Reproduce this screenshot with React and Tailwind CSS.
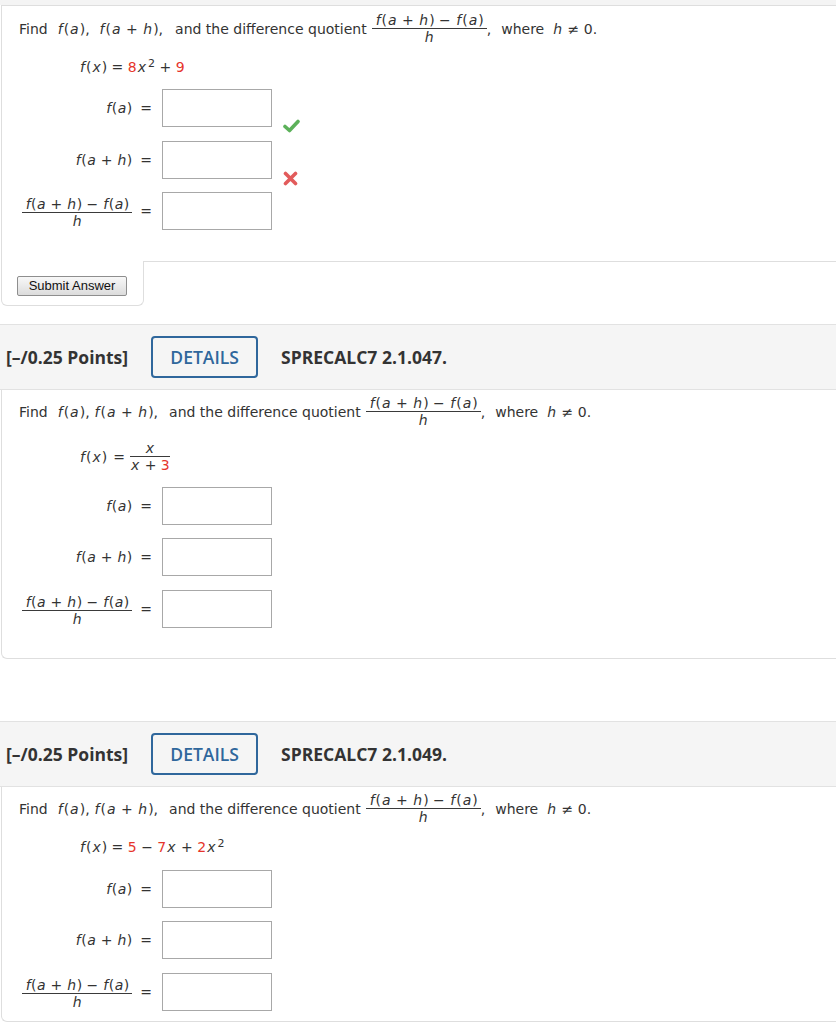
import React from 'react';

const RED = 'text-[#e6352b]';

const V = ({ children, tight }) => <i className={tight ? 'px-[0.5px]' : 'px-[1px]'}>{children}</i>;

function Frac({ num, den, className = '' }) {
  return (
    <span className={`inline-flex flex-col items-center leading-[16px] ${className}`}>
      <span className="px-[3px] whitespace-nowrap">{num}</span>
      <span className="self-stretch h-px bg-[#3a3a3a]" />
      <span className="whitespace-nowrap">{den}</span>
    </span>
  );
}

const FA = ({ tight }) => (
  <span className="whitespace-nowrap">
    <V tight={tight}>f</V>(<V tight={tight}>a</V>)
  </span>
);
const FAH = ({ tight }) => (
  <span className="whitespace-nowrap">
    <V tight={tight}>f</V>(<V tight={tight}>a</V> + <V tight={tight}>h</V>)
  </span>
);
const DQ = ({ className = '', tight }) => (
  <Frac
    className={className}
    num={
      <>
        <FAH tight={tight} /> − <FA tight={tight} />
      </>
    }
    den={<V tight={tight}>h</V>}
  />
);

function Check() {
  return (
    <svg width="17" height="14" viewBox="0 0 17 14" className="ml-[11px] self-end mb-[-6px]">
      <polyline points="2,7.5 6.5,11.5 15,2.5" fill="none" stroke="#5cb15a" strokeWidth="3.6" strokeLinecap="round" strokeLinejoin="round" />
    </svg>
  );
}

function Cross() {
  return (
    <svg width="15" height="15" viewBox="0 0 15 15" className="ml-[11px] self-end mb-[-7px]">
      <path d="M2.5 2.5 L12.5 12.5 M12.5 2.5 L2.5 12.5" fill="none" stroke="#e25b5b" strokeWidth="3.6" strokeLinecap="round" />
    </svg>
  );
}

function Row({ label, mark, className = '' }) {
  return (
    <div className={`flex items-center ${className}`}>
      <div className="w-[150px] flex justify-end items-center whitespace-nowrap">
        <span>{label}</span>
        <span className="ml-[8px]">=</span>
      </div>
      <div className="ml-[10px] w-[110px] h-[38px] border border-[#a8a8a8] bg-white shrink-0" />
      {mark}
    </div>
  );
}

function FirstLine({ wide }) {
  return (
    <div className="flex items-center pl-[17px] whitespace-nowrap">
      <span>Find</span>
      <span className="ml-[9px]">
        <FA />,
      </span>
      <span className={wide ? 'ml-[9px]' : 'ml-[4px]'}>
        <FAH />,
      </span>
      <span className={wide ? 'ml-[12px]' : 'ml-[11px]'}>and the difference quotient</span>
      <DQ className="ml-[5px]" />
      <span>,</span>
      <span className="ml-[10px]">where</span>
      <span className="ml-[8px]">
        <V>h</V> ≠ 0.
      </span>
    </div>
  );
}

function Rows({ gaps, marks = [] }) {
  return (
    <>
      <Row label={<FA tight />} mark={marks[0]} />
      <Row label={<FAH tight />} mark={marks[1]} className={gaps[0]} />
      <Row label={<DQ tight />} mark={marks[2]} className={gaps[1]} />
    </>
  );
}

function Header({ num, className = '' }) {
  return (
    <div
      className={`h-[66px] bg-[#f5f5f5] border-y border-[#e2e2e2] flex items-center pl-[6px] font-['Open_Sans',sans-serif] text-[17.5px] text-[#333] ${className}`}
    >
      <span className="font-bold">[–/0.25 Points]</span>
      <div className="ml-[23px] w-[107px] h-[42px] border-2 border-[#2f679c] rounded-[4px] flex items-center justify-center text-[#2f679c] font-semibold">
        DETAILS
      </div>
      <span className="ml-[23px] font-bold">SPRECALC7 {num}</span>
    </div>
  );
}

const Sup = ({ children }) => <sup className="text-[11px] ml-[1px]">{children}</sup>;

export default function App() {
  return (
    <div className="w-[836px] min-h-[1024px] bg-white overflow-hidden font-['DejaVu_Sans','Verdana',sans-serif] text-[14px] leading-[20px] text-[#333]">
      <div className="h-[5px] bg-[#f4f4f4]" />

      {/* Problem 1 */}
      <div className="ml-px">
        <div className="border-l border-t border-[#dedede] pt-[6px] pb-[31px]">
          <FirstLine wide />
          <div className="mt-[12px] pl-[77px] whitespace-nowrap">
            <V>f</V>(<V>x</V>) = <span className={RED}>8</span>
            <V>x</V>
            <Sup>2</Sup> + <span className={RED}>9</span>
          </div>
          <div className="mt-[12px]">
            <Rows gaps={['mt-[14px]', 'mt-[13px]']} marks={[<Check key="c" />, <Cross key="x" />]} />
          </div>
        </div>
        <div className="flex">
          <div className="w-[143px] h-[45px] border-l border-r border-b border-[#dedede] rounded-b-[6px] pt-[14px] pl-[15px]">
            <button className="w-[110px] h-[20px] border border-[#8e8e8e] rounded-[2px] bg-linear-to-b from-[#f8f8f8] to-[#dcdcdc] font-['Liberation_Sans',Arial,sans-serif] text-[13px] leading-[18px] text-[#111]">
              Submit Answer
            </button>
          </div>
          <div className="flex-1 border-t border-[#dedede]" />
        </div>
      </div>

      {/* Problem 2 */}
      <Header num="2.1.047." className="mt-[18px]" />
      <div className="ml-px border-l border-b border-[#dedede] rounded-bl-[6px] pt-[5px] pb-[30px]">
        <FirstLine />
        <div className="mt-[12px] pl-[77px] flex items-center whitespace-nowrap">
          <span>
            <V>f</V>(<V>x</V>)
          </span>
          <span className="ml-[6px]">=</span>
          <Frac
            className="ml-[5px]"
            num={<V>x</V>}
            den={
              <>
                <V>x</V> + <span className={RED}>3</span>
              </>
            }
          />
        </div>
        <div className="mt-[14px]">
          <Rows gaps={['mt-[13px]', 'mt-[14px]']} />
        </div>
      </div>

      {/* Problem 3 */}
      <Header num="2.1.049." className="mt-[62px]" />
      <div className="ml-px border-l border-b border-[#dedede] rounded-bl-[6px] pt-[5px] pb-[10px]">
        <FirstLine />
        <div className="mt-[12px] pl-[77px] whitespace-nowrap">
          <V>f</V>(<V>x</V>) = <span className={RED}>5</span> − <span className={RED}>7</span>
          <V>x</V> + <span className={RED}>2</span>
          <V>x</V>
          <Sup>2</Sup>
        </div>
        <div className="mt-[13px]">
          <Rows gaps={['mt-[13px]', 'mt-[14px]']} />
        </div>
      </div>
    </div>
  );
}
